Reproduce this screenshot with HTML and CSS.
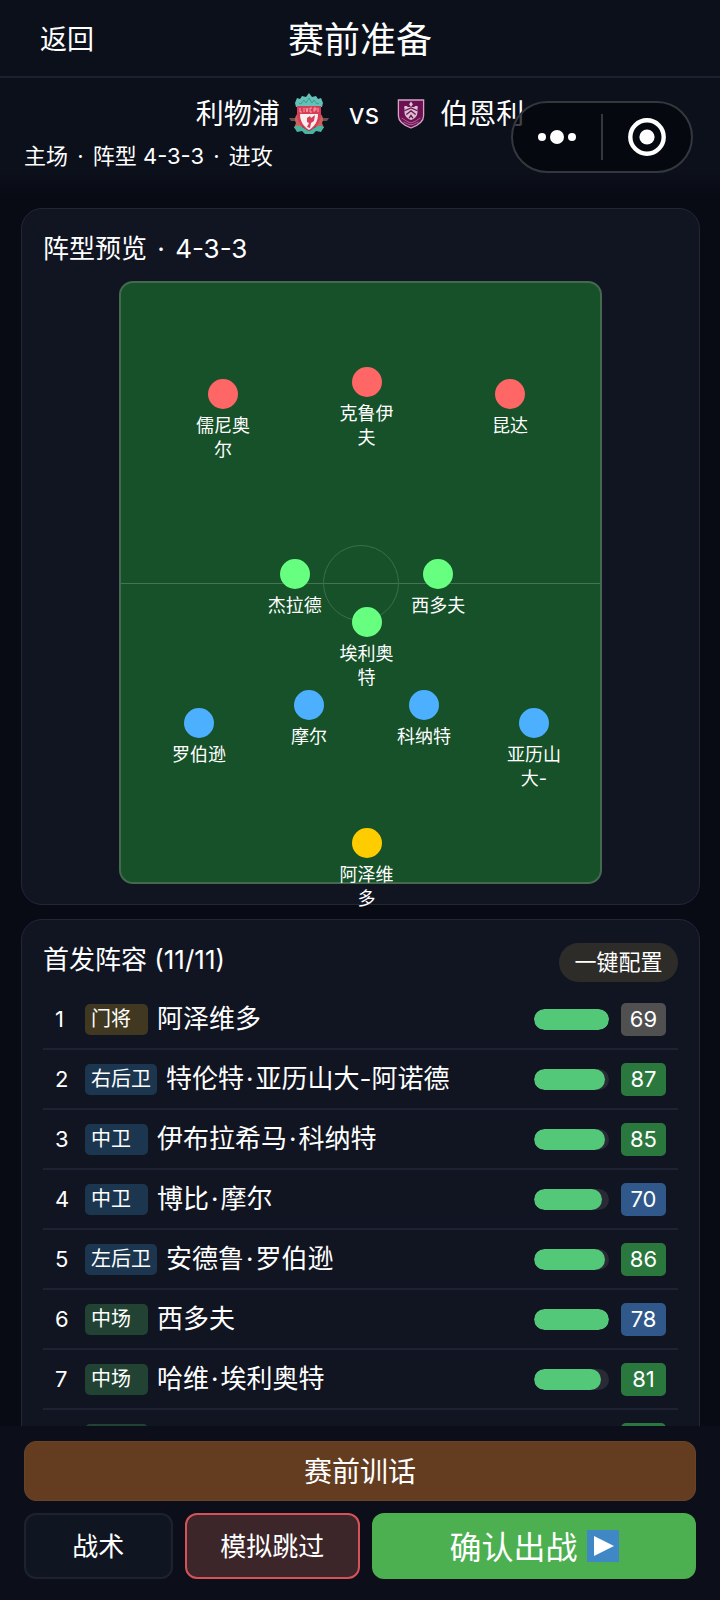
FILE: index.html
```html
<!DOCTYPE html>
<html lang="zh-CN">
<head>
<meta charset="utf-8">
<meta name="viewport" content="width=device-width, initial-scale=1">
<title>赛前准备</title>
<link rel="stylesheet" href="styles.css">
</head>
<body>
<div class="app">
  <header class="topbar">
    <button class="back" type="button">返回</button>
    <h1 class="topbar-title">赛前准备</h1>
  </header>

  <section class="match">
    <div class="teams">
      <span>利物浦</span>
      <svg class="crest-home" viewBox="0 0 40 42" aria-hidden="true">
        <path d="M0 25h9l1 3H2zM40 25h-9l-1 3h8z" fill="#655252"/>
        <path d="M9 20c-3 3-4 7-2 10l-2 5 8 2V22zM31 20c3 3 4 7 2 10l2 5-8 2V22z" fill="#c8645c"/>
        <path d="M6 10l2-5 3 1 2-3 4 1 3-4 3 4 4-1 2 3 3-1 2 5-1 4H7z" fill="#63c1b7"/>
        <path d="M10 10l2 1 3-4 2 3 3-5 3 5 2-3 3 4 2-1" fill="none" stroke="#3f9b92"/>
        <path d="M5 34c5-3 8 0 15 4 7-4 10-7 15-4l-3 5-5-1-3 3h-8l-3-3-5 1z" fill="#48b5a3"/>
        <path d="M8 13h24v8c0 8-5 14-12 17C13 35 8 29 8 21z" fill="#d93c56"/>
        <path d="M11 21h18c0 7-3 12-9 16-6-4-9-9-9-16z" fill="#f8eeee"/>
        <path d="M11 15v4h2M15 15v4M17 15l1 4 1-4M23 15h-2v4h2M25 19v-4h2v2h-2M29 15v4" fill="none" stroke="#f7b9c0" stroke-width=".8"/>
        <path d="M18 25l3-2 1 2 4-3-1 6-3 2-1 5-3-1 2-4-2-1z" fill="#d93c56"/>
      </svg>
      <span class="versus">vs</span>
      <svg class="crest-away" viewBox="0 0 30 33" aria-hidden="true">
        <path d="M1.500 1.500h27v17c0 6-5 10-13.500 13C6.500 28.500 1.500 24.500 1.500 18.500z" fill="#6d1152" stroke="#d3a4c5" stroke-width="1.4"/>
        <path d="M8 9h14v5c0 5-3 7-7 9-4-2-7-4-7-9z" fill="#d8bed0"/>
        <path d="M8 13l7-3 7 3M10 17l5-4 5 4M13 21l2-3 2 3" fill="none" stroke="#6d1152" stroke-width="1.4"/>
        <path d="M15 3l2 3-2 3-2-3zM8 8h3v2H8zM19 8h3v2h-3z" fill="#e1c5d9"/>
        <path d="M5 21c3 1 5 4 10 5 5-1 7-4 10-5M7 25c3 1 5 3 8 3s5-2 8-3" fill="none" stroke="#b56c9c"/>
      </svg>
      <span>伯恩利</span>
    </div>
    <p class="match-info">主场 <span class="sep">·</span> 阵型 4-3-3 <span class="sep">·</span> 进攻</p>
  </section>

  <div class="capsule">
    <button class="capsule-btn" type="button" aria-label="更多">
      <svg class="more-icon" viewBox="0 0 40 40" aria-hidden="true"><g fill="#fff"><circle cx="5" cy="20" r="4"/><circle cx="20" cy="20" r="7"/><circle cx="35" cy="20" r="4"/></g></svg>
    </button>
    <button class="capsule-btn" type="button" aria-label="关闭">
      <svg class="close-icon" viewBox="0 0 40 40" aria-hidden="true"><circle cx="20" cy="20" r="16.7" fill="none" stroke="#fff" stroke-width="4.4"/><circle cx="20" cy="20" r="7.6" fill="#fff"/></svg>
    </button>
  </div>

  <main class="content">
    <section class="panel">
      <h2 class="panel-title">阵型预览 <span class="sep">·</span> 4-3-3</h2>
      <div class="pitch">
        <div class="halfway"></div>
        <div class="circle"></div>
        <div class="player" style="left:20%;top:16%"><i class="dot fwd"></i>儒尼奥尔</div>
        <div class="player" style="left:50%;top:14%"><i class="dot fwd"></i>克鲁伊夫</div>
        <div class="player" style="left:80%;top:16%"><i class="dot fwd"></i>昆达</div>
        <div class="player" style="left:35%;top:46%"><i class="dot mid"></i>杰拉德</div>
        <div class="player" style="left:65%;top:46%"><i class="dot mid"></i>西多夫</div>
        <div class="player" style="left:50%;top:54%"><i class="dot mid"></i>埃利奥特</div>
        <div class="player" style="left:15%;top:71%"><i class="dot def"></i>罗伯逊</div>
        <div class="player" style="left:38%;top:68%"><i class="dot def"></i>摩尔</div>
        <div class="player" style="left:62%;top:68%"><i class="dot def"></i>科纳特</div>
        <div class="player" style="left:85%;top:71%"><i class="dot def"></i>亚历山大-</div>
        <div class="player" style="left:50%;top:91%"><i class="dot gk"></i>阿泽维多</div>
      </div>
    </section>

    <section class="panel">
      <div class="panel-head">
        <h2 class="panel-title">首发阵容 (11/11)</h2>
        <button class="auto" type="button">一键配置</button>
      </div>
      <ol class="lineup">
        <li class="row"><span class="num">1</span><span class="pos pos-gk">门将</span><span class="name">阿泽维多</span><span class="bar"><i class="fill" style="width:100%"></i></span><span class="rate low">69</span></li>
        <li class="row"><span class="num">2</span><span class="pos pos-def">右后卫</span><span class="name">特伦特<span class="dot-sep">·</span>亚历山大-阿诺德</span><span class="bar"><i class="fill" style="width:94%"></i></span><span class="rate high">87</span></li>
        <li class="row"><span class="num">3</span><span class="pos pos-def">中卫</span><span class="name">伊布拉希马<span class="dot-sep">·</span>科纳特</span><span class="bar"><i class="fill" style="width:94%"></i></span><span class="rate high">85</span></li>
        <li class="row"><span class="num">4</span><span class="pos pos-def">中卫</span><span class="name">博比<span class="dot-sep">·</span>摩尔</span><span class="bar"><i class="fill" style="width:91%"></i></span><span class="rate good">70</span></li>
        <li class="row"><span class="num">5</span><span class="pos pos-def">左后卫</span><span class="name">安德鲁<span class="dot-sep">·</span>罗伯逊</span><span class="bar"><i class="fill" style="width:95%"></i></span><span class="rate high">86</span></li>
        <li class="row"><span class="num">6</span><span class="pos pos-mid">中场</span><span class="name">西多夫</span><span class="bar"><i class="fill" style="width:100%"></i></span><span class="rate good">78</span></li>
        <li class="row"><span class="num">7</span><span class="pos pos-mid">中场</span><span class="name">哈维<span class="dot-sep">·</span>埃利奥特</span><span class="bar"><i class="fill" style="width:89%"></i></span><span class="rate high">81</span></li>
        <li class="row"><span class="num"></span><span class="pos pos-mid"></span><span class="name"></span><span class="bar"></span><span class="rate high"></span></li>
      </ol>
    </section>
  </main>

  <footer class="actions">
    <button class="btn talk" type="button">赛前训话</button>
    <div class="action-row">
      <button class="btn tactics" type="button">战术</button>
      <button class="btn skip" type="button">模拟跳过</button>
      <button class="btn confirm" type="button"><span class="confirm-label">确认出战</span>
        <svg class="play" viewBox="0 0 32 32" aria-hidden="true"><path d="M0 0h32v32H0z" fill="#3f88c5"/><path d="M7 6l20 10L7 26z" fill="#fff"/></svg>
      </button>
    </div>
  </footer>
</div>
</body>
</html>
```

FILE: styles.css
```css
* { box-sizing: border-box; }
body {
  margin: 0;
  background: #080b14;
  color: #fff;
  font-family: Inter, "Noto Sans CJK SC", sans-serif;
}
button {
  margin: 0;
  padding: 0;
  border: 0;
  background: none;
  color: inherit;
  font: inherit;
  cursor: pointer;
}
h1, h2, p, ol { margin: 0; padding: 0; font-weight: 400; }

.app {
  position: relative;
  display: flex;
  flex-direction: column;
  height: 100vh;
}

.topbar {
  display: grid;
  grid-template-columns: 1fr auto 1fr;
  align-items: center;
  height: 78px;
  padding: 3px 40px 0;
  background: #0c101b;
  border-bottom: 2px solid #1d2031;
}
.back { justify-self: start; font-size: 27px; line-height: 40px; }
.topbar-title { font-size: 36px; line-height: 52px; }

.match {
  padding: 14px 24px 20px;
  background: linear-gradient(#0c101b 80%, #080b14);
}
.teams {
  display: flex;
  justify-content: center;
  align-items: center;
  font-size: 28px;
  line-height: 44px;
}
.crest-home { width: 40px; height: 42px; margin: 0 20px 0 9px; }
.crest-away { width: 28px; height: 32px; margin: 0 15px 0 18px; }
.match-info { padding-top: 1px; font-size: 22px; line-height: 39px; }
.sep { padding: 0 3px; }
.dot-sep { padding: 0 2px; }

.capsule {
  position: absolute;
  top: 101px;
  right: 27px;
  display: flex;
  width: 182px;
  height: 72px;
  padding: 11px 0;
  background: rgba(3, 6, 11, .75);
  border: 2px solid #34373d;
  border-radius: 36px;
}
.capsule-btn { flex: 1; display: flex; align-items: center; justify-content: center; }
.capsule-btn + .capsule-btn { border-left: 2px solid #34373d; }
.more-icon, .close-icon { width: 40px; height: 40px; }

.content {
  flex: 1;
  min-height: 0;
  overflow: hidden;
  display: flex;
  flex-direction: column;
  gap: 14px;
  padding: 12px 20px 0 21px;
}
.panel {
  flex: none;
  padding: 20px 21px;
  background: #111522;
  border: 1px solid #232637;
  border-radius: 21px;
}
.panel-title { font-size: 26px; line-height: 40px; }
.pitch {
  position: relative;
  width: 76%;
  aspect-ratio: 4 / 5;
  margin: 12px auto 0;
  background: #165129;
  border: 2px solid #44694f;
  border-radius: 14px;
}
.halfway {
  position: absolute;
  top: 50%;
  left: 0;
  right: 0;
  height: 1px;
  background: #457453;
}
.circle {
  position: absolute;
  top: 50%;
  left: 50%;
  width: 76px;
  height: 76px;
  margin: -38px 0 0 -38px;
  border: 1px solid #3b6f4a;
  border-radius: 50%;
}
.player {
  position: absolute;
  width: 58px;
  margin-left: -23px;
  text-align: center;
  font-size: 18px;
  line-height: 24px;
}
.dot {
  display: block;
  width: 30px;
  height: 30px;
  margin: 0 auto 5px;
  border-radius: 50%;
}
.fwd { background: #ff6666; }
.mid { background: #66ff80; }
.def { background: #4db0ff; }
.gk { background: #ffcc00; }

.panel-head { display: flex; justify-content: space-between; align-items: flex-start; }
.auto {
  width: 119px;
  height: 39px;
  margin-top: 3px;
  padding-bottom: 2px;
  border-radius: 20px;
  background: #2d2c28;
  font-size: 22px;
  line-height: 36px;
}
.lineup { list-style: none; margin-top: 8px; }
.row {
  display: flex;
  align-items: center;
  height: 60px;
  padding: 0 12px;
  border-bottom: 2px solid #1e2232;
}
.num { width: 30px; font-size: 22px; line-height: 30px; }
.pos {
  min-width: 63px;
  height: 31px;
  margin-right: 9px;
  padding: 0 6px;
  border-radius: 5px;
  font-size: 20px;
  line-height: 30px;
}
.pos-gk { background: #403820; }
.pos-def { background: #1c364f; }
.pos-mid { background: #224234; }
.name { flex: 1; font-size: 26px; line-height: 40px; }
.bar {
  width: 75px;
  height: 21px;
  margin-right: 12px;
  border-radius: 11px;
  background: #292a36;
  overflow: hidden;
}
.fill { display: block; height: 100%; border-radius: 11px; background: #52c878; }
.rate {
  width: 45px;
  height: 33px;
  border-radius: 5px;
  text-align: center;
  font-size: 22px;
  line-height: 33px;
}
.low { background: #505050; }
.good { background: #30588a; }
.high { background: #2a783d; }

.actions {
  display: flex;
  flex-direction: column;
  gap: 12px;
  padding: 15px 24px 21px;
  background: #0c0f1a;
}
.action-row { display: grid; grid-template-columns: 11fr 13fr 24fr; gap: 12px; }
.btn { height: 66px; padding-bottom: 3px; border-radius: 12px; font-size: 26px; }
.talk { height: 60px; background: #643c1f; border: 1px solid #684329; font-size: 28px; }
.tactics { background: #101522; border: 2px solid #1e2130; }
.skip { background: #3c2629; border: 2px solid #d65259; }
.confirm {
  display: flex;
  align-items: center;
  justify-content: center;
  gap: 9px;
  padding-bottom: 0;
  background: #4caf50;
  font-size: 32px;
}
.confirm-label { padding-bottom: 3px; }
.play { width: 32px; height: 32px; }
```
